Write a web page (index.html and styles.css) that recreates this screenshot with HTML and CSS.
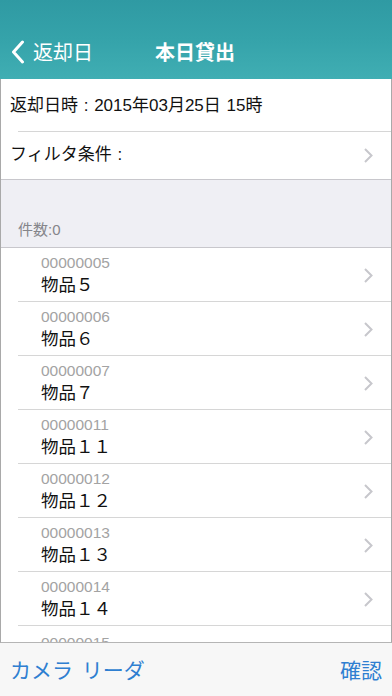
FILE: index.html
```html
<!DOCTYPE html>
<html lang="ja">
<head>
<meta charset="utf-8">
<title>本日貸出</title>
<link rel="stylesheet" href="styles.css">
</head>
<body>
<div class="screen">
  <header class="navbar">
    <div class="nav-back">
      <svg class="back-chevron" width="14" height="24" viewBox="0 0 14 24"><path d="M11.5 2 L2.5 12 L11.5 22" fill="none" stroke="#fff" stroke-width="3" stroke-linecap="round" stroke-linejoin="round"/></svg>
      <span class="back-label">返却日</span>
    </div>
    <div class="nav-title">本日貸出</div>
  </header>
  <main class="content">
    <div class="cell cell-first">
      <span class="cell-text">返却日時 : 2015年03月25日 15時</span>
    </div>
    <div class="cell cell-second">
      <span class="cell-text">フィルタ条件 :</span>
      <svg class="chevron" width="9" height="15" viewBox="0 0 9 15"><path d="M1 1 L7.5 7.5 L1 14" fill="none" stroke="#c7c7cc" stroke-width="2"/></svg>
    </div>
    <div class="section-gap">
      <span class="count">件数:0</span>
    </div>
    <ul class="list">
      <li class="item"><div class="item-body"><span class="code">00000005</span><span class="name">物品５</span></div><svg class="chevron" width="9" height="15" viewBox="0 0 9 15"><path d="M1 1 L7.5 7.5 L1 14" fill="none" stroke="#c7c7cc" stroke-width="2"/></svg></li>
      <li class="item"><div class="item-body"><span class="code">00000006</span><span class="name">物品６</span></div><svg class="chevron" width="9" height="15" viewBox="0 0 9 15"><path d="M1 1 L7.5 7.5 L1 14" fill="none" stroke="#c7c7cc" stroke-width="2"/></svg></li>
      <li class="item"><div class="item-body"><span class="code">00000007</span><span class="name">物品７</span></div><svg class="chevron" width="9" height="15" viewBox="0 0 9 15"><path d="M1 1 L7.5 7.5 L1 14" fill="none" stroke="#c7c7cc" stroke-width="2"/></svg></li>
      <li class="item"><div class="item-body"><span class="code">00000011</span><span class="name">物品１１</span></div><svg class="chevron" width="9" height="15" viewBox="0 0 9 15"><path d="M1 1 L7.5 7.5 L1 14" fill="none" stroke="#c7c7cc" stroke-width="2"/></svg></li>
      <li class="item"><div class="item-body"><span class="code">00000012</span><span class="name">物品１２</span></div><svg class="chevron" width="9" height="15" viewBox="0 0 9 15"><path d="M1 1 L7.5 7.5 L1 14" fill="none" stroke="#c7c7cc" stroke-width="2"/></svg></li>
      <li class="item"><div class="item-body"><span class="code">00000013</span><span class="name">物品１３</span></div><svg class="chevron" width="9" height="15" viewBox="0 0 9 15"><path d="M1 1 L7.5 7.5 L1 14" fill="none" stroke="#c7c7cc" stroke-width="2"/></svg></li>
      <li class="item"><div class="item-body"><span class="code">00000014</span><span class="name">物品１４</span></div><svg class="chevron" width="9" height="15" viewBox="0 0 9 15"><path d="M1 1 L7.5 7.5 L1 14" fill="none" stroke="#c7c7cc" stroke-width="2"/></svg></li>
      <li class="item item-partial"><div class="item-body"><span class="code">00000015</span></div></li>
    </ul>
  </main>
  <footer class="toolbar">
    <span class="tool-btn">カメラ リーダ</span>
    <span class="tool-btn">確認</span>
  </footer>
</div>
</body>
</html>
```

FILE: styles.css
```css
* { box-sizing: border-box; }
html, body {
  margin: 0;
  padding: 0;
  width: 392px;
  height: 696px;
  overflow: hidden;
  font-family: "Noto Sans CJK JP", "Noto Sans", "Liberation Sans", sans-serif;
  background: #fff;
}
.screen {
  display: flex;
  flex-direction: column;
  height: 696px;
}
.navbar {
  height: 79px;
  flex: none;
  background: linear-gradient(to bottom, #2f9aa3 0%, #35a3aa 50%, #40aeb3 100%);
  display: flex;
  align-items: center;
  padding-top: 24px;
  color: #fff;
}
.nav-back {
  display: flex;
  align-items: center;
  padding-left: 11px;
  width: 155px;
}
.back-chevron { flex: none; }
.back-label {
  font-size: 20px;
  line-height: 24px;
  margin-left: 8px;
}
.nav-title {
  font-size: 20px;
  line-height: 24px;
  font-weight: 700;
}
.content {
  flex: 1;
  overflow: hidden;
  border-left: 1px solid #a9a9a9;
  border-right: 1px solid #a9a9a9;
  border-bottom: 1px solid #b5b5b5;
  background: #fff;
}
.cell {
  display: flex;
  align-items: center;
  justify-content: space-between;
  padding-left: 9px;
  padding-right: 18px;
  background: #fff;
}
.cell-first {
  height: 52px;
  padding-top: 2px;
}
.cell-second {
  height: 49px;
  position: relative;
  border-bottom: 1px solid #c8c7cc;
}
.cell-second::before {
  content: "";
  position: absolute;
  left: 17px;
  right: 0;
  top: 0;
  height: 1px;
  background: #d6d6d6;
}
.cell-text {
  font-family: "Liberation Sans", "Noto Sans CJK JP", sans-serif;
  font-size: 17px;
  line-height: 22px;
  color: #111;
  word-spacing: 1px;
}
.section-gap {
  height: 68px;
  background: #efeff4;
  border-bottom: 1px solid #c8c7cc;
  display: flex;
  align-items: flex-end;
  padding-left: 17px;
  padding-bottom: 7px;
}
.count {
  font-family: "Liberation Sans", "Noto Sans CJK JP", sans-serif;
  font-size: 15px;
  line-height: 20px;
  color: #85858a;
}
.list {
  list-style: none;
  margin: 0;
  padding: 0;
}
.item {
  height: 54px;
  display: flex;
  align-items: center;
  justify-content: space-between;
  padding-left: 40px;
  padding-right: 18px;
  position: relative;
}
.item::after {
  content: "";
  position: absolute;
  left: 17px;
  right: 0;
  bottom: 0;
  height: 1px;
  background: #d6d6d6;
}
.item-partial {
  align-items: flex-start;
  padding-top: 5px;
}
.item-body {
  display: flex;
  flex-direction: column;
  padding-top: 3px;
}
.code {
  font-family: "Liberation Sans", "Noto Sans", sans-serif;
  font-size: 15.5px;
  line-height: 18px;
  color: #a3a3a3;
}
.name {
  font-family: "Liberation Sans", "Noto Sans CJK JP", sans-serif;
  font-size: 17.5px;
  line-height: 27px;
  color: #111;
}
.chevron { flex: none; }
.toolbar {
  height: 53px;
  flex: none;
  background: #f7f7f7;
  display: flex;
  align-items: center;
  justify-content: space-between;
  padding: 0 10px 2px 10px;
}
.tool-btn {
  font-size: 21px;
  line-height: 26px;
  color: #2f7fd1;
  word-spacing: 4px;
}
```
